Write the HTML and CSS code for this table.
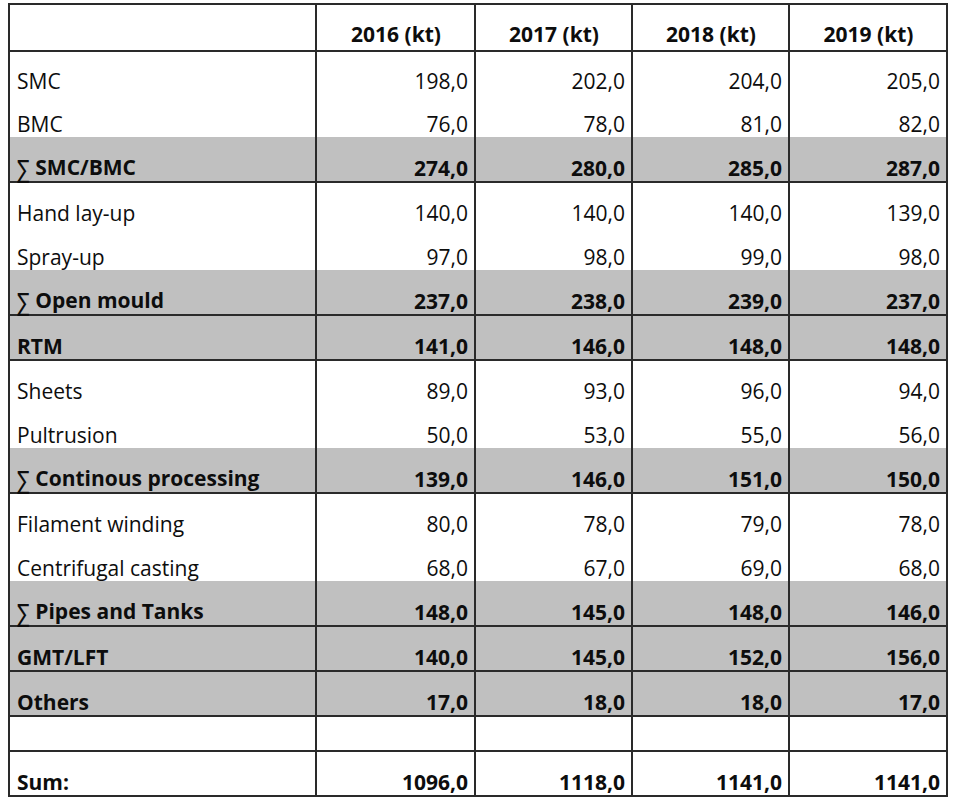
FILE: index.html
```html
<!DOCTYPE html>
<html lang="en">
<head>
<meta charset="utf-8">
<title>Composite production volumes</title>
<link rel="stylesheet" href="styles.css">
</head>
<body>
<table class="sheet">
  <colgroup>
    <col class="c-label">
    <col class="c-y1">
    <col class="c-y2">
    <col class="c-y3">
    <col class="c-y4">
  </colgroup>
  <thead>
    <tr class="h-head">
      <th class="end"></th>
      <th class="end">2016 (kt)</th>
      <th class="end">2017 (kt)</th>
      <th class="end">2018 (kt)</th>
      <th class="end">2019 (kt)</th>
    </tr>
  </thead>
  <tbody>
    <tr class="h-a"><td>SMC</td><td>198,0</td><td>202,0</td><td>204,0</td><td>205,0</td></tr>
    <tr class="h-b"><td>BMC</td><td>76,0</td><td>78,0</td><td>81,0</td><td>82,0</td></tr>
    <tr class="h-sum total"><td><span class="sig">∑</span> SMC/BMC</td><td>274,0</td><td>280,0</td><td>285,0</td><td>287,0</td></tr>

    <tr class="h-c"><td>Hand lay-up</td><td>140,0</td><td>140,0</td><td>140,0</td><td>139,0</td></tr>
    <tr class="h-d"><td>Spray-up</td><td>97,0</td><td>98,0</td><td>99,0</td><td>98,0</td></tr>
    <tr class="h-sum total"><td><span class="sig">∑</span> Open mould</td><td>237,0</td><td>238,0</td><td>239,0</td><td>237,0</td></tr>

    <tr class="h-single total"><td>RTM</td><td>141,0</td><td>146,0</td><td>148,0</td><td>148,0</td></tr>

    <tr class="h-c"><td>Sheets</td><td>89,0</td><td>93,0</td><td>96,0</td><td>94,0</td></tr>
    <tr class="h-d"><td>Pultrusion</td><td>50,0</td><td>53,0</td><td>55,0</td><td>56,0</td></tr>
    <tr class="h-sum total"><td><span class="sig">∑</span> Continous processing</td><td>139,0</td><td>146,0</td><td>151,0</td><td>150,0</td></tr>

    <tr class="h-c"><td>Filament winding</td><td>80,0</td><td>78,0</td><td>79,0</td><td>78,0</td></tr>
    <tr class="h-d"><td>Centrifugal casting</td><td>68,0</td><td>67,0</td><td>69,0</td><td>68,0</td></tr>
    <tr class="h-sum total"><td><span class="sig">∑</span> Pipes and Tanks</td><td>148,0</td><td>145,0</td><td>148,0</td><td>146,0</td></tr>

    <tr class="h-single total"><td>GMT/LFT</td><td>140,0</td><td>145,0</td><td>152,0</td><td>156,0</td></tr>
    <tr class="h-single total"><td>Others</td><td>17,0</td><td>18,0</td><td>18,0</td><td>17,0</td></tr>

    <tr class="h-empty"><td></td><td></td><td></td><td></td><td></td></tr>
    <tr class="h-single grand"><td>Sum:</td><td>1096,0</td><td>1118,0</td><td>1141,0</td><td>1141,0</td></tr>
  </tbody>
</table>
</body>
</html>
```

FILE: styles.css
```css
html, body {
  margin: 0;
  padding: 0;
  background: #ffffff;
}

body {
  padding: 3px 0 0 8px;
  font-family: "Open Sans", "Liberation Sans", sans-serif;
  color: #0d0d0d;
}

.sheet {
  border-collapse: separate;
  border-spacing: 0;
  table-layout: fixed;
  width: 940px;
  border-top: 2px solid #2a2a2a;
  border-left: 2px solid #2a2a2a;
  font-size: 21px;
  line-height: 20px;
}

.c-label { width: 307px; }
.c-y1 { width: 159px; }
.c-y2 { width: 157px; }
.c-y3 { width: 157px; }
.c-y4 { width: 158px; }

.sheet th,
.sheet td {
  box-sizing: border-box;
  padding: 0 6px 3px 7px;
  border-right: 2px solid #2a2a2a;
  vertical-align: bottom;
  text-align: right;
  white-space: nowrap;
  font-weight: 500;
}

.sheet td:first-child {
  text-align: left;
}

.sheet th {
  text-align: center;
  font-weight: 700;
  padding-bottom: 6px;
}

.sheet th.end {
  border-bottom: 2px solid #2a2a2a;
}

.h-head { height: 47px; }
.h-a { height: 42px; }
.h-b { height: 43px; }
.h-c { height: 43px; }
.h-d { height: 44px; }
.h-sum { height: 46px; }
.h-single { height: 45px; }
.h-empty { height: 35px; }

.h-sum td,
.h-single td,
.h-empty td {
  border-bottom: 2px solid #2a2a2a;
}

.total td {
  background: #c0c0c0;
  font-weight: 700;
}

.grand td {
  font-weight: 700;
}

.sig {
  display: inline-block;
  font-family: "DejaVu Sans", sans-serif;
  font-weight: 400;
  font-size: 19px;
  line-height: 20px;
  transform: scale(0.95, 1.3);
  transform-origin: 50% 5.5px;
}
```
